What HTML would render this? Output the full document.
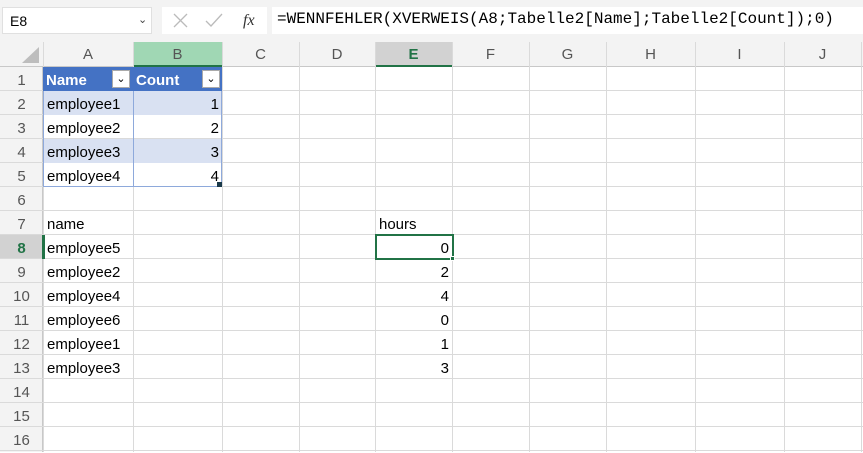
<!DOCTYPE html><html><head><style>
body{margin:0;width:863px;height:452px;overflow:hidden;background:#fff;font-family:"Liberation Sans",sans-serif;position:relative}
.a{position:absolute;box-sizing:border-box}
.t{position:absolute;font-size:15px;line-height:24px;color:#000;white-space:nowrap;margin-top:2px}
.h{position:absolute;font-size:15px;color:#555;text-align:center;line-height:24px;margin-top:1px}
</style></head><body>
<div class="a" style="left:0;top:0;width:863px;height:42px;background:#f3f3f3"></div>
<div class="a" style="left:2px;top:7px;width:150px;height:27px;background:#fff;border:1px solid #e0e0e0"></div>
<div class="t" style="left:10px;top:7px;font-size:14px">E8</div>
<div class="t" style="left:138px;top:6px;font-size:11px;color:#444">&#8964;</div>
<div class="a" style="left:162px;top:7px;width:105px;height:27px;background:#fff"></div>
<svg class="a" style="left:170px;top:11px" width="90" height="18"><path d="M4 3L17 16M17 3L4 16" stroke="#bbb" stroke-width="1.3" fill="none"/><path d="M36 10L41 15L52 3" stroke="#bbb" stroke-width="1.3" fill="none"/><text x="73" y="14" font-family="Liberation Serif" font-style="italic" font-size="16" fill="#333">fx</text></svg>
<div class="a" style="left:272px;top:7px;width:591px;height:27px;background:#fff"></div>
<div class="t" style="left:277px;top:5px;font-family:'Liberation Mono',monospace;font-size:16px">=WENNFEHLER(XVERWEIS(A8;Tabelle2[Name];Tabelle2[Count]);0)</div>
<div class="a" style="left:0;top:42px;width:863px;height:25px;background:#f3f3f3;border-bottom:1px solid #c8c8c8"></div>
<div class="a" style="left:0;top:67px;width:43px;height:385px;background:#f3f3f3;border-right:1px solid #c8c8c8"></div>
<svg class="a" style="left:20px;top:46px" width="20" height="18"><path d="M19 1V17H2Z" fill="#bdbdbd"/></svg>
<div class="a" style="left:133px;top:42px;width:89px;height:25px;background:#a0d7b4;border-bottom:2px solid #217346"></div>
<div class="a" style="left:375px;top:42px;width:77px;height:25px;background:#d2d2d2;border-bottom:2px solid #217346"></div>
<div class="a" style="left:0;top:235px;width:43px;height:24px;background:#d2d2d2"></div>
<div id="g"></div>
<div class="a" style="left:43px;top:67px;width:179px;height:24px;background:#4472c4"></div>
<div class="a" style="left:43px;top:91px;width:179px;height:24px;background:#d9e1f2"></div>
<div class="a" style="left:43px;top:139px;width:179px;height:24px;background:#d9e1f2"></div>
<div class="a" style="left:43px;top:91px;width:179px;height:96px;border:1px solid #8ea9db;border-top:none"></div>
<div class="a" style="left:133px;top:91px;width:1px;height:96px;background:#8ea9db"></div>
<div class="t" style="left:46px;top:67px;color:#fff;font-weight:bold">Name</div>
<div class="t" style="left:136px;top:67px;color:#fff;font-weight:bold">Count</div>
<div class="a" style="left:112px;top:70px;width:18px;height:18px;background:#fff;border:1px solid #aaa;font-size:11px;text-align:center;line-height:16px">&#8964;</div>
<div class="a" style="left:202px;top:70px;width:18px;height:18px;background:#fff;border:1px solid #aaa;font-size:11px;text-align:center;line-height:16px">&#8964;</div>
<div class="a" style="left:217px;top:182px;width:5px;height:5px;background:#1a3a4a"></div>
<div class="a" style="left:42px;top:235px;width:3px;height:24px;background:#217346"></div>
<div class="a" style="left:375px;top:234px;width:79px;height:26px;border:2px solid #217346"></div>
<div class="a" style="left:450px;top:256px;width:5px;height:5px;background:#217346;border:1px solid #fff"></div>
<div id="c"></div>
<script>
var cols=[43,133,222,299,375,452,529,606,695,784,861],L="ABCDEFGHIJ",g="";
for(var i=0;i<10;i++){g+='<div class="h" style="left:'+cols[i]+'px;top:42px;width:'+(cols[i+1]-cols[i])+'px;'+(i==4?'color:#217346;font-weight:bold':'')+'">'+L[i]+'</div>';}
for(var i=0;i<cols.length;i++)g+='<div class="a" style="left:'+cols[i]+'px;top:42px;width:1px;height:410px;background:#dadada"></div>';
for(var r=1;r<=16;r++){var y=67+(r-1)*24;g+='<div class="a" style="left:0;top:'+(y+23)+'px;width:863px;height:1px;background:#dadada"></div>';g+='<div class="h" style="left:0;top:'+(y+1)+'px;width:43px;'+(r==8?'color:#217346;font-weight:bold':'')+'">'+r+'</div>';}
document.getElementById('g').outerHTML=g;
var d=[[2,'employee1','1'],[3,'employee2','2'],[4,'employee3','3'],[5,'employee4','4'],[7,'name',''],[8,'employee5',''],[9,'employee2',''],[10,'employee4',''],[11,'employee6',''],[12,'employee1',''],[13,'employee3','']],c="";
d.forEach(function(x){var y=67+(x[0]-1)*24;c+='<div class="t" style="left:47px;top:'+y+'px">'+x[1]+'</div>';if(x[2])c+='<div class="t" style="left:133px;width:86px;text-align:right;top:'+y+'px">'+x[2]+'</div>';});
c+='<div class="t" style="left:379px;top:211px">hours</div>';
[[8,0],[9,2],[10,4],[11,0],[12,1],[13,3]].forEach(function(x){c+='<div class="t" style="left:375px;width:74px;text-align:right;top:'+(67+(x[0]-1)*24)+'px">'+x[1]+'</div>';});
document.getElementById('c').outerHTML=c;
</script>
</body></html>
